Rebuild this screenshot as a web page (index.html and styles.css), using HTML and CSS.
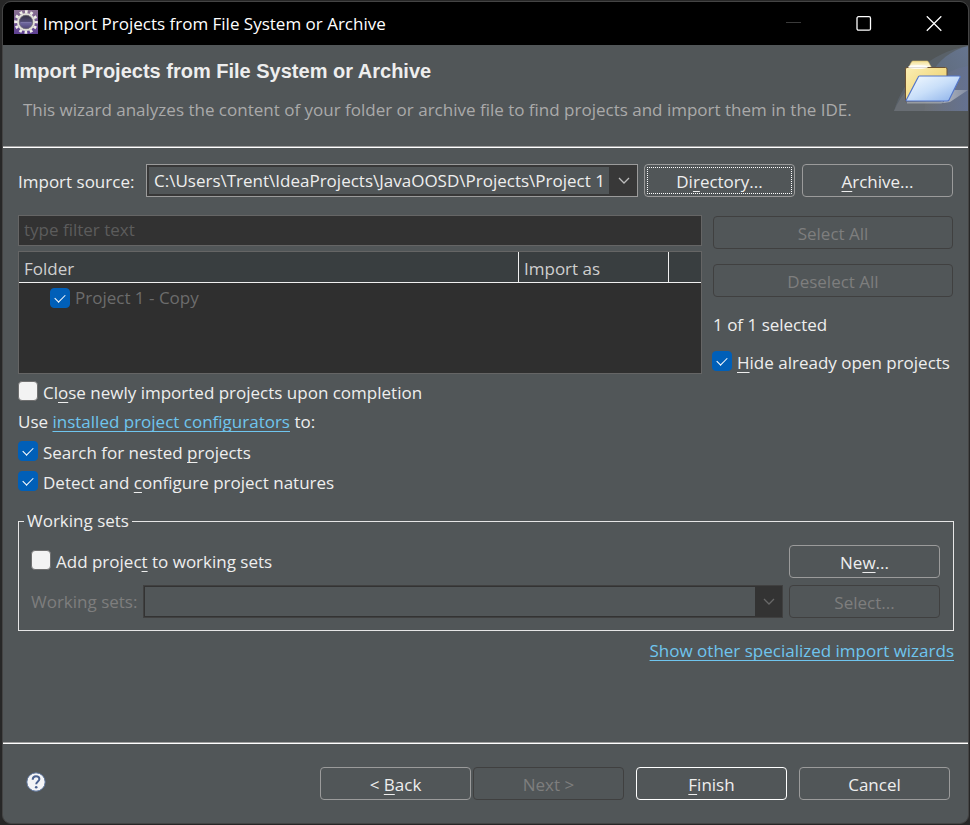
FILE: index.html
```html
<!DOCTYPE html>
<html lang="en">
<head>
<meta charset="utf-8">
<title>Import Projects from File System or Archive</title>
<link rel="stylesheet" href="styles.css">
</head>
<body>
<div class="window">
  <header class="titlebar">
    <svg class="app-icon" viewBox="0 0 24 24" aria-hidden="true">
      <defs>
        <linearGradient id="app-bg" x1="0" y1="0" x2="0" y2="1"><stop offset="0" stop-color="#8a7191"/><stop offset="1" stop-color="#5d3f92"/></linearGradient>
        <linearGradient id="app-core" x1="0" y1="0" x2="0" y2="1"><stop offset="0" stop-color="#2c2838"/><stop offset=".45" stop-color="#4f4970"/><stop offset=".6" stop-color="#6c649c"/><stop offset="1" stop-color="#453a68"/></linearGradient>
      </defs>
      <rect width="24" height="24" fill="url(#app-bg)"/>
      <circle cx="12" cy="12" r="10.300" fill="none" stroke="#efeee8" stroke-width="3" stroke-dasharray="2.700 2.693" stroke-dashoffset="1.350"/>
      <circle cx="12" cy="12" r="8" fill="url(#app-core)" stroke="#e2e0d8" stroke-width="2.200"/>
      <circle cx="12" cy="12" r="6.700" fill="none" stroke="#77737c" stroke-width=".8"/>
      <path d="M6.500 12.500h11" stroke="#7d76a8" stroke-width="1"/>
    </svg>
    <span class="titlebar-text">Import Projects from File System or Archive</span>
    <div class="window-controls">
      <button type="button" aria-label="Minimize" disabled><svg viewBox="0 0 16 16"><path d="M0 6.500h15" stroke="#3a3a3a"/></svg></button>
      <button type="button" aria-label="Maximize"><svg viewBox="0 0 16 16"><rect x="1" y=".7" width="13.500" height="13.500" rx="1.500" fill="none" stroke="#fff" stroke-width="1.300"/></svg></button>
      <button type="button" aria-label="Close"><svg viewBox="0 0 16 16"><path d="M.8.3l14.500 14.500M15.300.3.8 14.800" stroke="#fff" stroke-width="1.300"/></svg></button>
    </div>
  </header>

  <section class="banner">
    <div class="banner-text">
      <h1>Import Projects from File System or Archive</h1>
      <p>This wizard analyzes the content of your folder or archive file to find projects and import them in the IDE.</p>
    </div>
    <svg class="banner-art" viewBox="0 0 74 66" aria-hidden="true">
      <defs>
        <linearGradient id="arc" x1="0" y1="0" x2="1" y2="0"><stop offset="0" stop-color="#6b6f74"/><stop offset="1" stop-color="#657291"/></linearGradient>
        <linearGradient id="arc-top" x1="0" y1="1" x2="1" y2="0"><stop offset="0" stop-color="#5b6570"/><stop offset="1" stop-color="#66758f"/></linearGradient>
        <linearGradient id="folder-back" x1="0" y1="0" x2="1" y2="1"><stop offset="0" stop-color="#fbeeb4"/><stop offset=".5" stop-color="#f3dc88"/><stop offset="1" stop-color="#e8c868"/></linearGradient>
        <linearGradient id="folder-tab" x1="0" y1="0" x2="0" y2="1"><stop offset="0" stop-color="#f3df92"/><stop offset="1" stop-color="#fffdf0"/></linearGradient>
        <linearGradient id="folder-front" x1="0" y1="0" x2="1" y2="1"><stop offset="0" stop-color="#f5fbff"/><stop offset=".5" stop-color="#c9dff9"/><stop offset="1" stop-color="#89afe9"/></linearGradient>
        <linearGradient id="shadow" x1="0" y1="0" x2="1" y2="0"><stop offset="0" stop-color="#c9ccd2"/><stop offset="1" stop-color="#8c95a8"/></linearGradient>
      </defs>
      <path d="M0 66C9 34 36 7 74 1v65z" fill="#596169"/>
      <path d="M0 66C7 49 20 34 38 26v40z" fill="#686d73"/>
      <path d="M38 28C44 16 57 5 74 1v65H30z" fill="url(#arc-top)"/>
      <path d="M30 66C32 42 50 25 74 21v45z" fill="url(#arc)"/>
      <path d="M57 45h17L56 57l-7 1z" fill="url(#shadow)" opacity=".75"/>
      <path d="M13 57.500h34l2-1" stroke="#c8cbd0" stroke-width="2" opacity=".5" fill="none"/>
      <path d="M14.500 22.500l3-5.500q.5-1 1.500-1h14q1 0 1.500 1l3 5.500z" fill="url(#folder-tab)" stroke="#d9bd6d" stroke-width=".6"/>
      <path d="M11.500 56V24q0-1.500 1.500-1.500h38.500q1.500 0 1.500 1.500v31z" fill="url(#folder-back)" stroke="#6b5134" stroke-width="1"/>
      <ellipse cx="24" cy="22" rx="10" ry="2" fill="#fff" opacity=".8"/>
      <path d="M12 55.500L24 32.500q.5-1.500 1.500-1.500h40q1 0 .5 1.500L55 55q-.5 1-2 1H12.500z" fill="url(#folder-front)" stroke="#5577c9" stroke-width="1.200"/>
    </svg>
  </section>

  <main class="content">
    <div class="source-row">
      <label for="source">Import source:</label>
      <div class="combo">
        <select id="source"><option>C:\Users\Trent\IdeaProjects\JavaOOSD\Projects\Project 1</option></select>
        <svg viewBox="0 0 12 8" aria-hidden="true"><path d="M1 1l5 5 5-5"/></svg>
      </div>
      <div class="source-buttons">
        <button type="button" class="btn focused">Di<u>r</u>ectory...</button>
        <button type="button" class="btn"><u>A</u>rchive...</button>
      </div>
    </div>

    <div class="selection">
      <div class="tree-column">
        <input class="filter" type="text" placeholder="type filter text" aria-label="Filter folders">
        <div class="tree">
          <table>
            <colgroup><col class="col-folder"><col class="col-import"><col></colgroup>
            <thead><tr><th>Folder</th><th>Import as</th><td></td></tr></thead>
            <tbody><tr><td><label class="check tree-item"><input type="checkbox" checked><span>Project 1 - Copy</span></label></td><td></td><td></td></tr></tbody>
          </table>
        </div>
      </div>
      <div class="side-column">
        <button type="button" class="btn" disabled>Select All</button>
        <button type="button" class="btn" disabled>Deselect All</button>
        <p class="count">1 of 1 selected</p>
        <label class="check"><input type="checkbox" checked><span><u>H</u>ide already open projects</span></label>
      </div>
    </div>

    <div class="options">
      <label class="check"><input type="checkbox"><span>Cl<u>o</u>se newly imported projects upon completion</span></label>
      <p>Use <a href="#">installed project configurators</a> to:</p>
      <label class="check"><input type="checkbox" checked><span>Search for nested <u>p</u>rojects</span></label>
      <label class="check"><input type="checkbox" checked><span>Detect and <u>c</u>onfigure project natures</span></label>
    </div>

    <fieldset class="working-sets">
      <legend>Working sets</legend>
      <div class="sets-row">
        <label class="check"><input type="checkbox"><span>Add projec<u>t</u> to working sets</span></label>
        <button type="button" class="btn">Ne<u>w</u>...</button>
      </div>
      <div class="sets-row">
        <label class="muted" for="sets">Working sets:</label>
        <div class="combo">
          <select id="sets" disabled><option></option></select>
          <svg viewBox="0 0 12 8" aria-hidden="true"><path d="M1 1l5 5 5-5"/></svg>
        </div>
        <button type="button" class="btn" disabled>Select...</button>
      </div>
    </fieldset>
    <p class="other"><a href="#">Show other specialized import wizards</a></p>
  </main>

  <footer class="footer">
    <button type="button" class="help" aria-label="Help">
      <svg viewBox="0 0 20 20"><circle cx="10" cy="10" r="9.200" fill="#f4f5f7" stroke="#587099" stroke-width="1"/><path d="M6.700 7.700C6.700 5.300 8 4.200 10 4.200s3.400 1.100 3.400 2.900c0 2.300-3.200 2.500-3.200 5.200" fill="none" stroke="#4b6290" stroke-width="2"/><circle cx="10.200" cy="15.200" r="1.300" fill="#4b6290"/></svg>
    </button>
    <div class="nav-buttons">
      <button type="button" class="btn">&lt; <u>B</u>ack</button>
      <button type="button" class="btn" disabled>Next &gt;</button>
    </div>
    <button type="button" class="btn default"><u>F</u>inish</button>
    <button type="button" class="btn">Cancel</button>
  </footer>
</div>
</body>
</html>
```
FILE: styles.css
```css
* {
  box-sizing: border-box;
}

:root {
  --panel: #515658;
  --text: #eeeeee;
  --muted: #7e7e7e;
  --field: #323232;
  --line: #e6e6e6;
  --link: #6fc5ee;
}

body {
  margin: 0;
  padding: 1px 1px 1px 2px;
  min-height: 100vh;
  display: flex;
  background: #272727;
  color: var(--text);
  font: 17px/24px "Open Sans", "Noto Sans", sans-serif;
}

button, input, select {
  font: inherit;
  color: inherit;
}

p, h1 {
  margin: 0;
}

u, a {
  text-decoration: underline 1px;
  text-underline-offset: 3px;
  text-decoration-skip-ink: none;
}

a {
  color: var(--link);
}

.window {
  flex: 1;
  min-width: 0;
  display: flex;
  flex-direction: column;
  border: 1px solid #444444;
  border-radius: 9px;
  background: var(--panel);
  overflow: hidden;
}

.titlebar {
  height: 43px;
  display: flex;
  align-items: center;
  padding-left: 11px;
  background: #000000;
  color: #ffffff;
}

.app-icon {
  width: 24px;
  height: 24px;
  margin: 0 5px 4px 0;
}

.window-controls {
  display: flex;
  margin-left: auto;
}

.window-controls button {
  width: 70px;
  height: 43px;
  padding: 0 0 0 2px;
  display: grid;
  place-items: center;
  border: 0;
  background: none;
}

.window-controls svg {
  width: 16px;
  height: 16px;
}

.banner {
  height: 103px;
  display: flex;
  justify-content: space-between;
  align-items: flex-start;
  border-bottom: 1px solid #ffffff;
  box-shadow: inset 0 -1px #a0a0a0;
}

.banner-text {
  padding: 14px 0 0 11px;
  white-space: nowrap;
}

.banner h1 {
  font: bold 20px/24px "Liberation Sans", sans-serif;
}

.banner p {
  padding: 15px 0 0 9px;
  color: #aaaaaa;
}

.banner-art {
  flex: none;
  width: 74px;
  height: 66px;
}

.content {
  flex: 1;
  padding: 16px 15px;
}

.source-row {
  display: flex;
  align-items: center;
  gap: 6px;
}

.source-row label {
  width: 122px;
  padding-top: 2px;
  white-space: nowrap;
}

.combo {
  flex: 1;
  min-width: 0;
  display: grid;
  align-items: center;
}

.combo select,
.combo svg {
  grid-area: 1 / 1;
}

.combo select {
  width: 100%;
  height: 33px;
  padding: 0 32px 0 7px;
  appearance: none;
  border: 1px solid #9b9b9b;
  border-radius: 0;
  background: linear-gradient(to left, #383838 28px, var(--panel) 28px);
  box-shadow: inset 0 0 0 2px #383838;
}

.combo select:disabled {
  opacity: 1;
  border-color: #404040;
  box-shadow: inset 0 0 0 1px #333333;
  background: linear-gradient(to left, #333333 27px, var(--panel) 27px);
}

.combo svg {
  justify-self: end;
  width: 12px;
  height: 8px;
  margin-right: 8px;
  pointer-events: none;
  fill: none;
  stroke: #bdbdbd;
  stroke-width: 1.3;
}

.combo select:disabled + svg {
  stroke: #686868;
}

.btn {
  width: 151px;
  height: 33px;
  padding: 2px 0 0;
  border: 1px solid #9b9b9b;
  border-radius: 4px;
  background: var(--panel);
}

.btn:disabled {
  border-color: #404040;
  color: var(--muted);
}

.btn.default {
  border-color: #ffffff;
}

.btn.focused {
  outline: 1px dotted #ffffff;
  outline-offset: -4px;
}

.source-buttons {
  display: flex;
  gap: 7px;
}

.selection {
  display: flex;
  gap: 11px;
  margin-top: 18px;
}

.tree-column {
  flex: 1;
  min-width: 0;
  display: flex;
  flex-direction: column;
  gap: 5px;
}

.filter {
  width: 100%;
  height: 31px;
  padding: 0 5px 2px;
  border: 1px solid #656565;
  background: var(--field);
}

.filter::placeholder {
  color: #5c5c5c;
  opacity: 1;
}

.tree {
  height: 123px;
  border: 1px solid #656565;
  background: #2f2f2f;
}

.tree table {
  width: 100%;
  table-layout: fixed;
  border-collapse: collapse;
}

.col-folder {
  width: 500px;
}

.col-import {
  width: 150px;
}

.tree th,
.tree td {
  height: 31px;
  padding: 0 5px;
  text-align: left;
  font-weight: normal;
}

.tree thead tr {
  background: #393e40;
  box-shadow: inset 0 -1px #f0f0f0;
  color: #cfcfcf;
}

.tree th {
  padding-top: 2px;
  box-shadow: inset -1px 0 #f0f0f0;
}

.side-column {
  width: 240px;
  padding-top: 1px;
  display: flex;
  flex-direction: column;
}

.side-column .btn {
  width: 100%;
  margin-bottom: 15px;
}

.side-column .check {
  margin-left: -1px;
}

.count {
  padding-top: 1px;
  margin-bottom: 10px;
}

.check {
  display: flex;
  align-items: center;
  gap: 5px;
  height: 30px;
  white-space: nowrap;
}

.check input {
  flex: none;
  width: 20px;
  height: 20px;
  margin: 0 0 3px;
  display: grid;
  place-items: center;
  appearance: none;
  border: 1px solid #707070;
  border-radius: 4px;
  background: #f3f3f3;
}

.check input:checked {
  border-color: #005fb8;
  background: #005fb8;
}

.check input:checked::after {
  content: "";
  width: 9px;
  height: 5px;
  border: solid #ffffff;
  border-width: 0 0 1px 1px;
  transform: translateY(-1px) rotate(-45deg);
}

.tree td .tree-item {
  height: 28px;
  margin-bottom: 2px;
  padding-left: 26px;
  color: #6c6c6c;
}

.tree-item input {
  margin-bottom: 0;
}

.options {
  line-height: 30px;
}

.options .check span,
.side-column .check span,
.sets-row .check span {
  padding-top: 1px;
}

.working-sets {
  margin: 12px -1px 0 0;
  padding: 12px 13px 12px 12px;
  border: 1px solid var(--line);
  min-width: 0;
}

.working-sets legend {
  margin-left: -7px;
  padding: 0 3px;
}

.sets-row {
  display: flex;
  justify-content: space-between;
  align-items: center;
  gap: 6px;
}

.sets-row + .sets-row {
  margin-top: 7px;
}

.muted {
  color: var(--muted);
}

.other {
  margin: 8px -1px 0 0;
  text-align: right;
}

.footer {
  height: 80px;
  display: flex;
  align-items: center;
  gap: 12px;
  padding: 0 18px 0 23px;
  border-top: 1px solid #ffffff;
  box-shadow: 0 -1px #a0a0a0;
}

.help {
  width: 20px;
  height: 20px;
  margin: 0 auto 3px 0;
  padding: 0;
  border: 0;
  background: none;
}

.help svg {
  display: block;
}

.nav-buttons {
  display: flex;
  gap: 2px;
}
```
